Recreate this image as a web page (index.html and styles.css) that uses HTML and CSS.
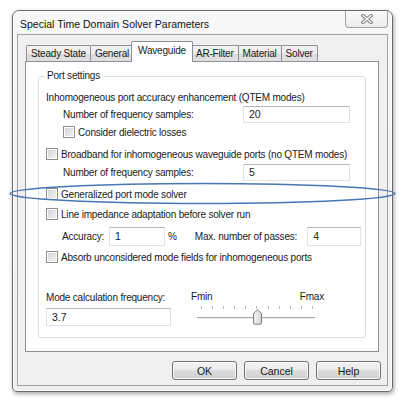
FILE: index.html
```html
<!DOCTYPE html>
<html>
<head>
<meta charset="utf-8">
<title>Special Time Domain Solver Parameters</title>
<link rel="stylesheet" href="styles.css">
</head>
<body>
<div class="window">
  <div class="titlebar">
    <span class="title">Special Time Domain Solver Parameters</span>
    <div class="close">
      <svg width="12" height="10" viewBox="0 0 12 10">
        <path d="M2 1.5 L10 8.5 M10 1.5 L2 8.5" stroke="#7a7a7a" stroke-width="3.2" stroke-linecap="square" fill="none"/>
        <path d="M2 1.5 L10 8.5 M10 1.5 L2 8.5" stroke="#ffffff" stroke-width="1.3" stroke-linecap="square" fill="none"/>
      </svg>
    </div>
  </div>
  <div class="client">
    <div class="tabs">
      <div class="tab">Steady State</div>
      <div class="tab">General</div>
      <div class="tab active">Waveguide</div>
      <div class="tab">AR-Filter</div>
      <div class="tab">Material</div>
      <div class="tab">Solver</div>
    </div>
    <div class="panel">
      <div class="group">
        <span class="legend">Port settings</span>
        <div class="row r1">Inhomogeneous port accuracy enhancement (QTEM modes)</div>
        <div class="row r2 indent">
          <span class="flabel">Number of frequency samples:</span>
          <span class="input wide">20</span>
        </div>
        <div class="row r3 indent"><span class="cb"></span><span>Consider dielectric losses</span></div>
        <div class="row r4"><span class="cb"></span><span>Broadband for inhomogeneous waveguide ports (no QTEM modes)</span></div>
        <div class="row r5 indent">
          <span class="flabel">Number of frequency samples:</span>
          <span class="input wide">5</span>
        </div>
        <div class="row r6"><span class="cb"></span><span>Generalized port mode solver</span></div>
        <div class="row r7"><span class="cb"></span><span>Line impedance adaptation before solver run</span></div>
        <div class="row r8 indent2">
          <span class="alabel">Accuracy:</span>
          <span class="input acc">1</span>
          <span class="pct">%</span>
          <span class="mlabel">Max. number of passes:</span>
          <span class="input passes">4</span>
        </div>
        <div class="row r9"><span class="cb"></span><span>Absorb unconsidered mode fields for inhomogeneous ports</span></div>
        <div class="freq">
          <div class="fcol">
            <div class="row">Mode calculation frequency:</div>
            <span class="input fin">3.7</span>
          </div>
          <div class="scol">
            <div class="row srange"><span>Fmin</span><span>Fmax</span></div>
            <div class="slider">
              <div class="ticks">
                <i></i><i></i><i></i><i></i><i></i><i></i><i></i><i></i><i></i><i></i><i></i>
              </div>
              <div class="track"></div>
              <svg class="thumb" width="11" height="16" viewBox="0 0 11 16">
                <defs>
                  <linearGradient id="tg" x1="0" y1="0" x2="1" y2="0">
                    <stop offset="0" stop-color="#f4f4f4"/>
                    <stop offset="1" stop-color="#d6d6d6"/>
                  </linearGradient>
                </defs>
                <path d="M1.5 4.5 L5.5 0.8 L9.5 4.5 L9.5 14 Q9.5 15.2 8.3 15.2 L2.7 15.2 Q1.5 15.2 1.5 14 Z" fill="url(#tg)" stroke="#7d7d7d" stroke-width="1"/>
              </svg>
            </div>
          </div>
        </div>
      </div>
    </div>
    <div class="buttons">
      <div class="btn">OK</div>
      <div class="btn">Cancel</div>
      <div class="btn">Help</div>
    </div>
  </div>
</div>
<svg class="mark" width="405" height="413" viewBox="0 0 405 413">
  <ellipse cx="202.5" cy="193.5" rx="192.5" ry="10" fill="none" stroke="#4a76b4" stroke-width="1.6"/>
</svg>
</body>
</html>
```

FILE: styles.css
```css
html, body {
  margin: 0;
  padding: 0;
  background: #ffffff;
}
body {
  position: relative;
  width: 405px;
  height: 413px;
  overflow: hidden;
  font-family: "Liberation Sans", Arial, sans-serif;
  font-size: 10px;
  letter-spacing: -0.2px;
  color: #1a1a1a;
}
.window {
  box-sizing: border-box;
  margin: 10px 0 0 12px;
  width: 381px;
  height: 382px;
  border: 1px solid #6a6a6a;
  border-radius: 7px 7px 5px 5px;
  background: linear-gradient(#f7f7f7, #efefef);
  box-shadow: 1px 2px 4px rgba(0, 0, 0, 0.35), inset 0 0 0 1px #ffffff;
  display: flex;
  flex-direction: column;
}
.titlebar {
  height: 23px;
  display: flex;
  align-items: flex-start;
  padding-left: 7px;
}
.title {
  font-size: 10.5px;
  letter-spacing: 0;
  line-height: 14px;
  margin-top: 6px;
  color: #111;
}
.close {
  margin-left: auto;
  margin-right: 4px;
  width: 41px;
  height: 16px;
  border: 1px solid #a2a2a2;
  border-top: none;
  border-radius: 0 0 4px 4px;
  background: linear-gradient(#fbfbfb, #ececec);
  display: flex;
  align-items: center;
  justify-content: center;
}
.client {
  margin: 0 4px 5px 4px;
  flex: 1;
  border: 1px solid #a3a3a3;
  background: #f0f0f0;
  display: flex;
  flex-direction: column;
}
.tabs {
  display: flex;
  align-items: flex-end;
  height: 20px;
  margin-top: 6px;
  padding-left: 8px;
}
.tab {
  height: 15px;
  line-height: 15px;
  padding: 0 4px;
  border: 1px solid #8c8f98;
  border-bottom: none;
  border-radius: 2px 2px 0 0;
  margin-left: -1px;
  background: linear-gradient(#f3f3f3, #ebebeb 50%, #dcdcdc 51%, #e0e0e0);
  white-space: nowrap;
}
.tab:first-child {
  margin-left: 0;
}
.tab.active {
  position: relative;
  z-index: 2;
  height: 20px;
  line-height: 17px;
  margin: 0 -2px -1px -3px;
  padding: 0 6px;
  background: #ffffff;
}
.tab.active + .tab {
  margin-left: 0;
}
.panel {
  margin: 0 8px 0 7px;
  height: 291px;
  box-sizing: border-box;
  border: 1px solid #8c8f98;
  background: #ffffff;
  padding: 14px 12px 0 12px;
}
.group {
  position: relative;
  border: 1px solid #d5dfe5;
  border-radius: 3px;
  padding: 12px 0 11px 7px;
}
.legend {
  position: absolute;
  top: -8px;
  left: 6px;
  padding: 0 2px;
  background: #ffffff;
  line-height: 14px;
}
.row {
  display: flex;
  align-items: center;
  height: 16px;
  white-space: nowrap;
}
.indent { padding-left: 17px; }
.indent2 { padding-left: 16px; }
.r2, .r5 { height: 18px; }
.r3 { margin-top: 1px; }
.r4 { margin-top: 6px; }
.r5 { margin-top: 1px; }
.r6 { margin-top: 5px; }
.r7 { margin-top: 4px; }
.r8 { margin-top: 4px; height: 20px; }
.r9 { margin-top: 3px; }
.flabel {
  width: 180px;
}
.input {
  box-sizing: border-box;
  display: flex;
  align-items: center;
  height: 17px;
  padding-left: 5px;
  border: 1px solid #dfe3e8;
  border-top-color: #b5b8bf;
  background: #ffffff;
  font-size: 10.5px;
  letter-spacing: 0;
}
.wide { width: 107px; }
.acc { width: 56px; height: 19px; margin-left: 5px; }
.pct { margin-left: 3px; }
.mlabel { margin-left: 18px; }
.passes { width: 54px; height: 19px; margin-left: 10px; }
.cb {
  box-sizing: border-box;
  width: 12px;
  height: 12px;
  margin-right: 3px;
  border: 1px solid #8e8f8f;
  background: linear-gradient(135deg, #cdd0d4, #f6f6f6);
  box-shadow: inset 0 0 0 1px #ffffff;
  flex: none;
}
.freq {
  display: flex;
  margin-top: 24px;
}
.fcol {
  width: 125px;
}
.fin {
  width: 125px;
  height: 18px;
  margin-top: 3px;
}
.scol {
  margin-left: 20px;
  width: 133px;
}
.srange {
  justify-content: space-between;
  margin-top: -1px;
}
.slider {
  position: relative;
  margin-left: 6px;
  width: 118px;
  height: 22px;
}
.ticks {
  display: flex;
  justify-content: space-between;
  padding: 2px 2px 0 4px;
}
.ticks i {
  display: block;
  width: 1px;
  height: 3px;
  background: #b8b8b8;
}
.track {
  margin-top: 8px;
  height: 1px;
  background: #a8a8a8;
  border-bottom: 1px solid #f2f2f2;
}
.thumb {
  position: absolute;
  left: 55px;
  top: 5px;
}
.buttons {
  display: flex;
  justify-content: flex-end;
  gap: 7px;
  margin-top: 9px;
  padding-right: 6px;
}
.btn {
  box-sizing: border-box;
  width: 65px;
  height: 19px;
  border: 1px solid #727272;
  border-radius: 3px;
  background: linear-gradient(#f3f3f3, #ebebeb 45%, #dddddd 50%, #d0d0d0);
  box-shadow: inset 0 0 0 1px rgba(255, 255, 255, 0.75);
  display: flex;
  align-items: center;
  justify-content: center;
  font-size: 10.5px;
  letter-spacing: 0;
}
.mark {
  position: absolute;
  left: 0;
  top: 0;
  pointer-events: none;
}
```
